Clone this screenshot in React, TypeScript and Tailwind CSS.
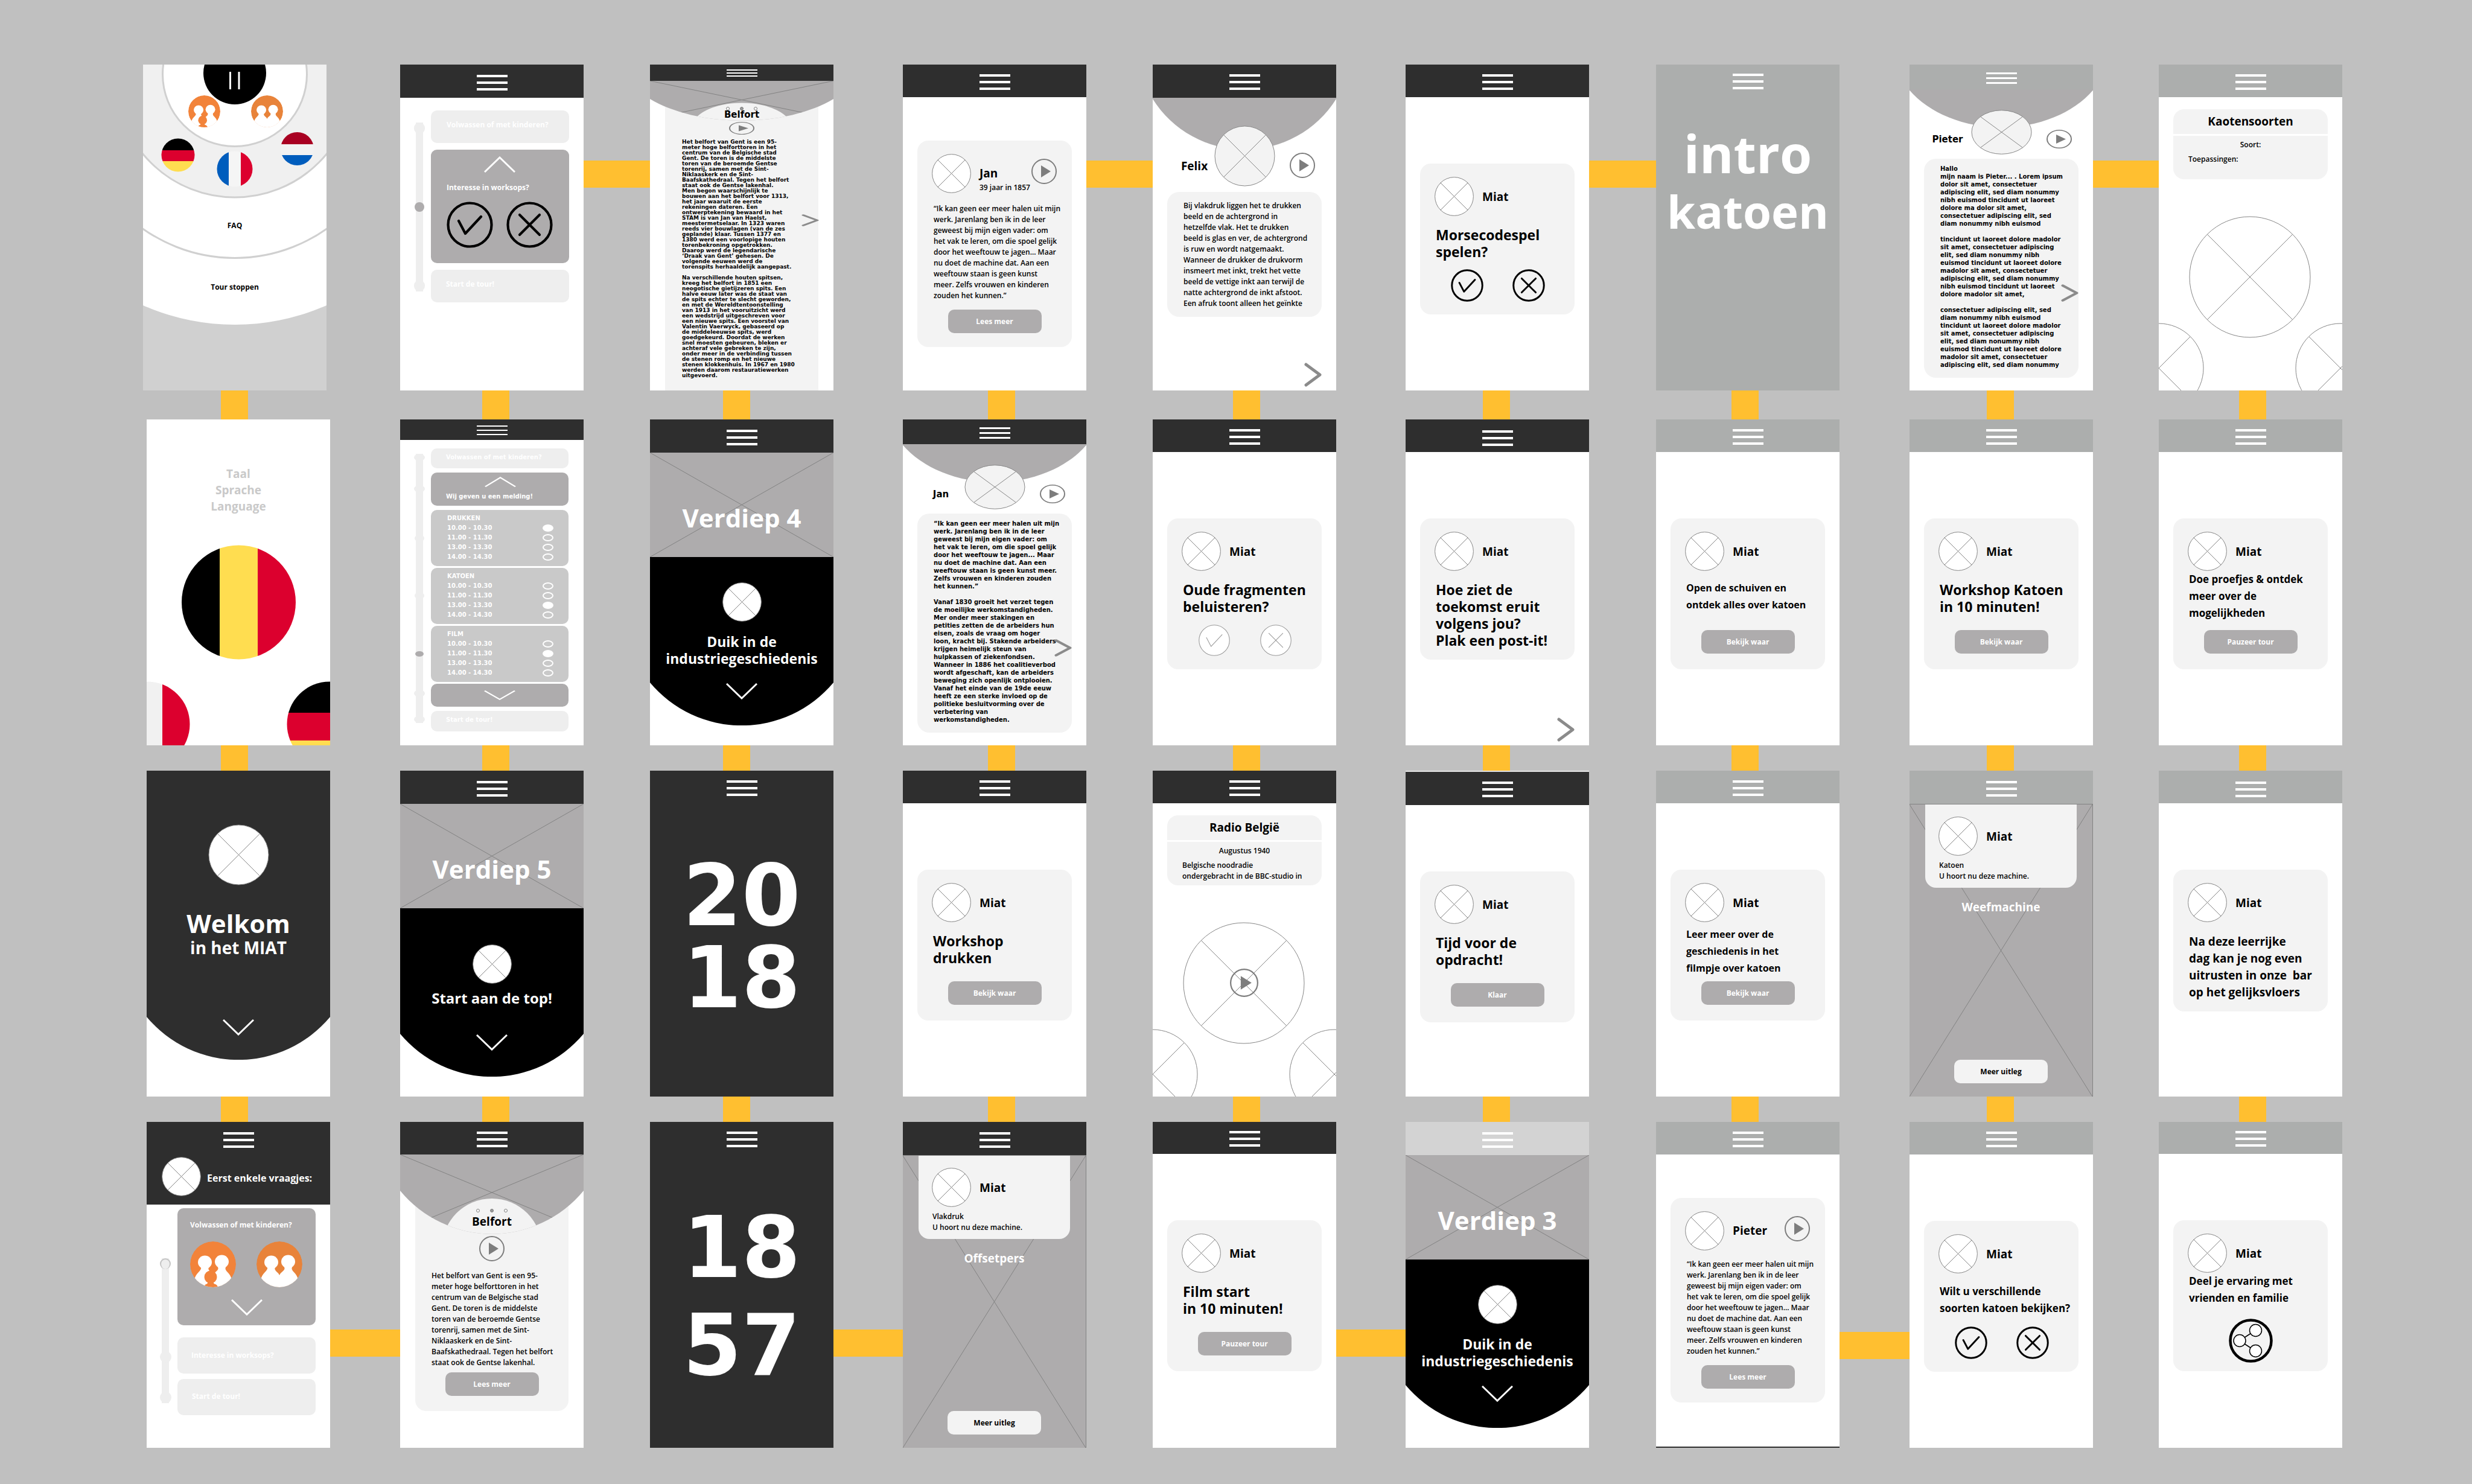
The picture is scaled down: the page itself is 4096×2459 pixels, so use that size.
import React, { ReactNode } from "react";

type Tone = "dark" | "gray" | "pale" | "none";

const toneClass: Record<Tone, string> = {
  dark: "bg-[#2e2e2e]",
  gray: "bg-[#acaead]",
  pale: "bg-[#d3d3d3]",
  none: "",
};

/* ---------- icons and drawings ---------- */

function Avatar({ className = "size-[65px]", fill = "#ffffff" }: { className?: string; fill?: string }) {
  return (
    <svg viewBox="0 0 102 102" preserveAspectRatio="none" className={`block shrink-0 ${className}`} aria-hidden="true">
      <g stroke="#868686" strokeWidth="1">
        <circle cx="51" cy="51" r="50" fill={fill} vectorEffect="non-scaling-stroke" />
        <path d="M15.6 15.6 86.4 86.4M86.4 15.6 15.6 86.4" vectorEffect="non-scaling-stroke" />
      </g>
    </svg>
  );
}

function PlayButton({ className = "h-[42px] w-[42px]" }: { className?: string }) {
  return (
    <button aria-label="Afspelen" className={`block shrink-0 ${className}`}>
      <svg viewBox="0 0 42 42" preserveAspectRatio="none" className="h-full w-full">
        <circle cx="21" cy="21" r="20" fill="none" stroke="#7d7d7d" strokeWidth="2" />
        <path d="M16 11 32 21 16 31Z" fill="#7d7d7d" />
      </svg>
    </button>
  );
}

function CheckIcon({ className, thin = false }: { className: string; thin?: boolean }) {
  return (
    <svg
      viewBox="0 0 77 77"
      className={className}
      fill={thin ? "#ffffff" : "none"}
      stroke={thin ? "#999999" : "#000000"}
      strokeWidth={thin ? 1.5 : 4.2}
      strokeLinecap="round"
      strokeLinejoin="round"
    >
      <circle cx="38.5" cy="38.5" r="36" />
      <path fill="none" d="M20 32 31 53 57 25" />
    </svg>
  );
}

function CrossIcon({ className, thin = false }: { className: string; thin?: boolean }) {
  return (
    <svg
      viewBox="0 0 77 77"
      className={className}
      fill={thin ? "#ffffff" : "none"}
      stroke={thin ? "#999999" : "#000000"}
      strokeWidth={thin ? 1.5 : 4.2}
      strokeLinecap="round"
    >
      <circle cx="38.5" cy="38.5" r="36" />
      <path d="M22 22 55 55M55 22 22 55" />
    </svg>
  );
}

function Caret({ up = false, className = "h-[27px] w-[52px]" }: { up?: boolean; className?: string }) {
  return (
    <svg viewBox="0 0 52 27" preserveAspectRatio="none" className={`block ${className}`} fill="none" stroke="#ffffff" strokeWidth="3">
      <path d={up ? "M1 26 26 2 51 26" : "M1 1 26 25 51 1"} />
    </svg>
  );
}

function Chevron({ className }: { className: string }) {
  return (
    <button aria-label="Volgende" className={`block ${className}`}>
      <svg
        viewBox="0 0 29 40"
        preserveAspectRatio="none"
        className="h-full w-full"
        fill="none"
        stroke="#8b8b8b"
        strokeWidth="5"
        strokeLinecap="round"
        strokeLinejoin="round"
      >
        <path d="M3 3 26 20 3 37" />
      </svg>
    </button>
  );
}

function Family({ child = false, className }: { child?: boolean; className: string }) {
  const tone = child ? "#f2833a" : "#e8833a";
  const id = child ? "family-child" : "family-pair";
  return (
    <svg viewBox="0 0 76 76" className={`block shrink-0 ${className}`}>
      <clipPath id={id}>
        <circle cx="38" cy="38" r="38" />
      </clipPath>
      <g clipPath={`url(#${id})`}>
        <circle cx="38" cy="38" r="38" fill={tone} />
        <g fill="#ffffff">
          <ellipse cx="24.5" cy="34.5" rx="11.5" ry="11" />
          <ellipse cx="52.5" cy="33.5" rx="11.5" ry="11" />
          <path d="M18 43Q19 46 14 51 8 57 7 64V76H69V64Q68 57 62 51 57 46 59 43H46Q48 46 43 50 39 53 38 56 37 53 33 50 29 46 31 43Z" />
        </g>
        {child && (
          <g fill={tone}>
            <ellipse cx="34" cy="59" rx="10.5" ry="10.5" />
            <path d="M29 67Q30 70 26 71 23 73 23 76H46Q45 72 42 71 38 70 39 67Z" />
          </g>
        )}
      </g>
    </svg>
  );
}

function ShareIcon({ className }: { className: string }) {
  return (
    <svg viewBox="0 0 73 73" className={className} fill="none" stroke="#000000">
      <circle cx="36.500" cy="36.500" r="34" strokeWidth="4.500" />
      <path d="M18 36.500 44 19.500M18 36.500 44 53.500" strokeWidth="1.500" />
      <g fill="#ffffff" strokeWidth="1.500">
        <circle cx="44.500" cy="19.500" r="10" />
        <circle cx="18" cy="36.500" r="10" />
        <circle cx="44.500" cy="53.500" r="10" />
      </g>
    </svg>
  );
}

function BoxCross({ color = "#828282" }: { color?: string }) {
  return (
    <svg viewBox="0 0 100 100" preserveAspectRatio="none" className="absolute inset-0 h-full w-full" stroke={color} aria-hidden="true">
      <path d="M0 0 100 100M100 0 0 100" vectorEffect="non-scaling-stroke" strokeWidth="1" />
    </svg>
  );
}

/* ---------- shared parts ---------- */

function Lines({ lines }: { lines: string[] }) {
  return (
    <>
      {lines.map((line, i) => (
        <span key={i} className="block whitespace-pre">
          {line === "" ? " " : line}
        </span>
      ))}
    </>
  );
}

function Menu({ flat = 1 }: { flat?: 1 | 2 | 3 | 4 }) {
  const bar = { 1: "h-1", 2: "h-[3px]", 3: "h-0.5", 4: "h-0.5" }[flat];
  const gap = { 1: "gap-[7px]", 2: "gap-[5px]", 3: "gap-[5px]", 4: "gap-[3px]" }[flat];
  return (
    <button aria-label="Menu" className={`flex w-[51px] flex-col ${gap}`}>
      <span className={`w-full bg-white ${bar}`} />
      <span className={`w-full bg-white ${bar}`} />
      <span className={`w-full bg-white ${bar}`} />
    </button>
  );
}

function Header({ tone = "dark", flat = 1, className = "h-[54px] pt-4" }: { tone?: Tone; flat?: 1 | 2 | 3 | 4; className?: string }) {
  return (
    <header className={`flex shrink-0 items-start justify-center ${toneClass[tone]} ${className}`}>
      <Menu flat={flat} />
    </header>
  );
}

function Screen({ className = "bg-white", children }: { className?: string; children?: ReactNode }) {
  return <section className={`relative flex min-h-[540px] flex-col overflow-hidden ${className}`}>{children}</section>;
}

function PillButton({ children, light = false }: { children: ReactNode; light?: boolean }) {
  return (
    <button
      className={`mx-auto block h-[39px] w-[155px] rounded-[10px] text-xs font-bold ${
        light ? "bg-[#f3f3f3] text-black" : "bg-[#aeacad] text-white"
      }`}
    >
      {children}
    </button>
  );
}

const textStyle = {
  heading: "pt-[17px] text-[23px] leading-7",
  close: "pt-[18px] text-[19px] leading-7",
  large: "pt-4 text-[17px] leading-7",
  mid: "pt-[14px] text-base leading-7",
  tight: "text-[17px] leading-7",
  lower: "pt-[6px] text-base leading-7",
};

function MessageScreen({
  tone = "dark",
  lines,
  style = "heading",
  action,
  choice,
  children,
  header = "h-[54px] pt-4",
}: {
  tone?: Tone;
  lines: string[];
  style?: keyof typeof textStyle;
  action?: string;
  choice?: "bold" | "thin";
  children?: ReactNode;
  header?: string;
}) {
  return (
    <Screen>
      <Header tone={tone} className={header} />
      <article className="mx-6 mt-[110px] rounded-[18px] bg-[#f3f3f3] pt-[22px]">
        <div className="flex items-center gap-[14px] pl-6">
          <Avatar />
          <h3 className="text-[19px] font-bold leading-6">Miat</h3>
        </div>
        <p className={`pl-[26px] font-bold ${choice ? "min-h-[88px]" : "min-h-[98px]"} ${textStyle[style]}`}>
          <Lines lines={lines} />
        </p>
        {action && (
          <div className="pb-[26px]">
            <PillButton>{action}</PillButton>
          </div>
        )}
        {choice && (
          <div className="flex gap-12 pb-[21px] pl-[51px]">
            <button aria-label="Ja">
              <CheckIcon className="size-[54px]" thin={choice === "thin"} />
            </button>
            <button aria-label="Nee">
              <CrossIcon className="size-[54px]" thin={choice === "thin"} />
            </button>
          </div>
        )}
        {children}
      </article>
    </Screen>
  );
}

const quote = [
  "“Ik kan geen eer meer halen uit mijn",
  "werk. Jarenlang ben ik in de leer",
  "geweest bij mijn eigen vader: om",
  "het vak te leren, om die spoel gelijk",
  "door het weeftouw te jagen... Maar",
  "nu doet de machine dat. Aan een",
];

function PersonScreen({ tone, name, sub, className }: { tone: Tone; name: string; sub?: string; className?: string }) {
  return (
    <Screen className={className}>
      <Header tone={tone} />
      <article className="mx-6 mt-[72px] rounded-[18px] bg-[#f3f3f3] pb-[23px] pt-[22px]">
        <div className="flex pl-6 pr-[25px]">
          <Avatar />
          <div className="flex-1 pl-[14px] pt-5">
            <h3 className="text-[19px] font-bold leading-6">{name}</h3>
            {sub && <p className="whitespace-nowrap text-xs font-semibold leading-6">{sub}</p>}
          </div>
          <div className="pt-2">
            <PlayButton />
          </div>
        </div>
        <p className="pb-[14px] pl-[27px] pt-[14px] text-xs font-semibold leading-[18px]">
          <Lines lines={[...quote, "weeftouw staan is geen kunst", "meer. Zelfs vrouwen en kinderen", "zouden het kunnen.”"]} />
        </p>
        <PillButton>Lees meer</PillButton>
      </article>
    </Screen>
  );
}

/* Profile page: grey bowl behind the portrait, text card below. */
function BioScreen({
  tone,
  name,
  lines,
  squat = false,
}: {
  tone: Tone;
  name: string;
  lines: string[];
  squat?: boolean;
}) {
  return (
    <Screen>
      {squat ? <Header tone={tone} flat={2} className="h-[41px] pt-[13px]" /> : <Header tone={tone} className="h-[55px] pt-4" />}
      <div className={`relative grid grid-cols-[102px_101px_1fr] ${squat ? "pt-[34px]" : "pt-[46px]"}`}>
        <svg
          viewBox="0 0 304 86"
          preserveAspectRatio="none"
          className={`absolute inset-x-0 top-0 w-full ${squat ? "h-[63px]" : "h-[86px]"}`}
          aria-hidden="true"
        >
          <path d="M0 0H304V2A179.500 179.500 0 0 1 0 2Z" fill="#aeacad" />
        </svg>
        <h3
          className={`relative self-center text-center font-bold ${
            squat ? "pl-6 pt-6 font-['DejaVu_Sans',sans-serif] text-[15px]" : "pl-9 pt-[34px] text-[19px]"
          }`}
        >
          {name}
        </h3>
        <Avatar fill="#f3f3f3" className={squat ? "relative h-[74px] w-[101px]" : "relative h-[101px] w-[101px]"} />
        <div className={squat ? "pl-6 pt-[33px]" : "pl-6 pt-[45px]"}>
          <PlayButton className={squat ? "h-[31px] w-[42px]" : "h-[42px] w-[42px]"} />
        </div>
      </div>
      <article
        className={`mx-6 rounded-[20px] bg-[#f3f3f3] pl-[27px] ${
          squat
            ? "mt-[7px] pb-[15px] pt-[10px] font-['DejaVu_Sans',sans-serif] text-[10px] font-bold leading-[13px]"
            : "mt-[9px] pb-[13px] pt-[14px] text-xs font-semibold leading-[18px]"
        }`}
      >
        <Lines lines={lines} />
      </article>
      {squat ? (
        <Chevron className="absolute right-6 top-[364px] h-[29px] w-[29px]" />
      ) : (
        <Chevron className="absolute bottom-[6px] right-6 h-10 w-[29px]" />
      )}
    </Screen>
  );
}

function FloorScreen({
  tone = "dark",
  floor,
  lines,
  gap,
  text = "pt-[19px] text-[23px]",
}: {
  tone?: Tone;
  floor: string;
  lines: string[];
  gap: string;
  text?: string;
}) {
  return (
    <Screen>
      <Header tone={tone} className="h-[55px] pt-[17px]" />
      <div className="relative h-[173px] bg-[#aeacad]">
        <BoxCross />
        <h2 className="relative pt-20 text-center text-[42px] font-bold leading-[56px] text-white">{floor}</h2>
      </div>
      <div className={`relative flex h-[279px] flex-col items-center text-white ${gap}`}>
        <svg viewBox="0 0 304 279" preserveAspectRatio="none" className="absolute inset-0 h-full w-full" aria-hidden="true">
          <path d="M0 0H304V208A198 198 0 0 1 0 208Z" />
        </svg>
        <Avatar className="relative size-[65px]" />
        <p className={`relative flex-1 text-center font-bold leading-7 ${text}`}>
          <Lines lines={lines} />
        </p>
        <button aria-label="Omlaag" className="relative pb-[43px]">
          <Caret />
        </button>
      </div>
    </Screen>
  );
}

function MachineScreen({ tone, topic, machine }: { tone: Tone; topic: string; machine: string }) {
  return (
    <Screen className="bg-[#aeacad]">
      <Header tone={tone} className="h-[55px] pt-[17px]" />
      <div className="relative flex flex-1 flex-col border-r border-t border-[#828282]">
        <BoxCross />
        <article className="relative mx-[26px] h-[138px] rounded-b-[18px] bg-[#f3f3f3] pt-5">
          <div className="flex items-center gap-[14px] pl-[22px]">
            <Avatar />
            <h3 className="text-[19px] font-bold leading-6">Miat</h3>
          </div>
          <p className="pl-[23px] pt-[7px] text-xs font-semibold leading-[18px]">
            <Lines lines={[topic, "U hoort nu deze machine."]} />
          </p>
        </article>
        <h4 className="relative flex-1 pt-5 text-center text-[19px] font-bold leading-6 text-white">{machine}</h4>
        <div className="relative pb-[22px]">
          <PillButton light>Meer uitleg</PillButton>
        </div>
      </div>
    </Screen>
  );
}

function YearScreen({ lines, gap }: { lines: string[]; gap: string }) {
  return (
    <Screen className="bg-[#2e2e2e]">
      <Header tone="none" className="h-[54px] pt-4" />
      <p className={`flex flex-col text-center font-['DejaVu_Sans',sans-serif] text-[140px] font-bold leading-[136px] text-white ${gap}`}>
        <Lines lines={lines} />
      </p>
    </Screen>
  );
}

function MediaScreen({ tone, title, sub, lines, play = false }: { tone: Tone; title: string; sub: string; lines: string[]; play?: boolean }) {
  return (
    <Screen>
      <Header tone={tone} />
      <article className="mx-6 mt-5 flex flex-col gap-[3px]">
        <h3 className="rounded-t-[18px] bg-[#f3f3f3] py-2 text-center text-[19px] font-bold leading-[25px]">{title}</h3>
        <div className="h-[72px] rounded-b-[18px] bg-[#f3f3f3] pt-[6px] text-xs font-semibold leading-[18px]">
          <p className="text-center">{sub}</p>
          <p className="pl-[25px] pt-[6px]">
            <Lines lines={lines} />
          </p>
        </div>
      </article>
      <div className="relative flex-1">
        <svg viewBox="0 0 304 350" className="absolute inset-0 h-full w-full" fill="none" stroke="#868686" aria-hidden="true">
          <circle cx="151" cy="162" r="100" />
          <path d="M80 91 222 233M222 91 80 233" />
          <circle cx="0" cy="313" r="74" />
          <path d="M0 313 52 261M0 313 37 350" />
          <circle cx="301" cy="313" r="74" />
          <path d="M301 313 249 261M304 316 301 313M304 310 264 350" />
        </svg>
        {play && <PlayButton className="relative ml-32 mt-[138px] h-[47px] w-[47px]" />}
      </div>
    </Screen>
  );
}

const belfort = [
  "Het belfort van Gent is een 95-",
  "meter hoge belforttoren in het",
  "centrum van de Belgische stad",
  "Gent. De toren is de middelste",
  "toren van de beroemde Gentse",
  "torenrij, samen met de Sint-",
  "Niklaaskerk en de Sint-",
  "Baafskathedraal. Tegen het belfort",
  "staat ook de Gentse lakenhal.",
];

const belfortMore = [
  "Men begon waarschijnlijk te",
  "bouwen aan het belfort voor 1313,",
  "het jaar waaruit de eerste",
  "rekeningen dateren. Een",
  "ontwerptekening bewaard in het",
  "STAM is van Jan van Haelst,",
  "meestermetselaar. In 1323 waren",
  "reeds vier bouwlagen (van de zes",
  "geplande) klaar. Tussen 1377 en",
  "1380 werd een voorlopige houten",
  "torenbekroning opgetrokken.",
  "Daarop werd de legendarische",
  "‘Draak van Gent’ gehesen. De",
  "volgende eeuwen werd de",
  "torenspits herhaaldelijk aangepast.",
  "",
  "Na verschillende houten spitsen,",
  "kreeg het belfort in 1851 een",
  "neogotische gietijzeren spits. Een",
  "halve eeuw later was de staat van",
  "de spits echter te slecht geworden,",
  "en met de Wereldtentoonstelling",
  "van 1913 in het vooruitzicht werd",
  "een wedstrijd uitgeschreven voor",
  "een nieuwe spits. Een voorstel van",
  "Valentin Vaerwyck, gebaseerd op",
  "de middeleeuwse spits, werd",
  "goedgekeurd. Doordat de werken",
  "snel moesten gebeuren, bleken er",
  "achteraf vele gebreken te zijn,",
  "onder meer in de verbinding tussen",
  "de stenen romp en het nieuwe",
  "stenen klokkenhuis. In 1967 en 1980",
  "werden daarom restauratiewerken",
  "uitgevoerd.",
];

function BelfortHero({ id, className }: { id: string; className: string }) {
  return (
    <svg viewBox="0 0 304 190" preserveAspectRatio="none" className={`absolute inset-x-0 top-0 w-full ${className}`} aria-hidden="true">
      <clipPath id={id}>
        <path d="M0 0H304V60A197 197 0 0 1 0 60Z" />
      </clipPath>
      <g clipPath={`url(#${id})`}>
        <rect width="304" height="190" fill="#aeacad" />
        <path d="M0 0 304 126M304 0 0 126" stroke="#828282" vectorEffect="non-scaling-stroke" />
        <circle cx="152" cy="156" r="83" fill="#f3f3f3" />
      </g>
    </svg>
  );
}

function Dots({ className }: { className: string }) {
  return (
    <div className={`flex items-center justify-center gap-[17px] ${className}`}>
      <span className="size-[6px] rounded-full border border-[#7d7d7d] bg-white" />
      <span className="size-[6px] rounded-full border border-[#7d7d7d] bg-[#9a9a9a]" />
      <span className="size-[6px] rounded-full border border-[#7d7d7d] bg-white" />
    </div>
  );
}

function BelfortShort() {
  return (
    <Screen>
      <Header className="h-[54px] pt-4" />
      <div className="relative">
        <BelfortHero id="belfort-short" className="h-[190px]" />
        <article className="mx-[25px] rounded-[18px] bg-[#f3f3f3] pb-[25px] pt-[90px]">
          <div className="relative flex flex-col items-center">
            <Dots className="h-[6px]" />
            <h3 className="pt-[3px] text-[19px] font-bold leading-6">Belfort</h3>
            <div className="pt-3">
              <PlayButton />
            </div>
            <p className="self-start pb-[7px] pl-[27px] pt-[15px] text-xs font-semibold leading-[18px]">
              <Lines lines={belfort} />
            </p>
            <PillButton>Lees meer</PillButton>
          </div>
        </article>
      </div>
    </Screen>
  );
}

function BelfortLong() {
  return (
    <Screen>
      <Header flat={4} className="h-[27px] pt-2" />
      <div className="relative flex flex-1 flex-col">
        <BelfortHero id="belfort-long" className="h-[95px]" />
        <article className="mx-[25px] flex-1 bg-[#f3f3f3] pt-11">
          <div className="relative flex flex-col items-center font-['DejaVu_Sans',sans-serif] font-bold">
            <Dots className="h-1" />
            <h3 className="text-[15px] leading-4">Belfort</h3>
            <div className="pt-1">
              <PlayButton className="h-[21px] w-[42px]" />
            </div>
            <p className="self-start pl-[28px] pt-2 text-[9px] leading-[9px]">
              <Lines lines={[...belfort, ...belfortMore]} />
            </p>
          </div>
        </article>
      </div>
      <Chevron className="absolute right-6 top-[248px] h-5 w-[29px]" />
    </Screen>
  );
}

/* ---------- individual screens ---------- */

function WheelScreen() {
  return (
    <Screen className="-ml-[6px] mr-[6px] bg-[#d0d0d0]">
      <svg viewBox="0 0 304 540" className="absolute inset-0 h-full w-full" aria-hidden="true">
        <circle cx="152" cy="54" r="377" fill="#ffffff" />
        <circle cx="152" cy="57" r="263.500" fill="#ffffff" stroke="#d0d0d0" strokeWidth="3" />
        <circle cx="152" cy="23" r="197" fill="#f0f0f0" stroke="#d0d0d0" strokeWidth="3" />
        <circle cx="152" cy="16" r="119.500" fill="#ffffff" stroke="#d0d0d0" strokeWidth="3" />
        <circle cx="152" cy="14" r="52" />
        <path d="M144.500 12V41M159 12V41" stroke="#ffffff" strokeWidth="3" />
        <clipPath id="flag-de">
          <circle cx="58" cy="150" r="27.500" />
        </clipPath>
        <g clipPath="url(#flag-de)">
          <rect x="30" y="122" width="56" height="20" />
          <rect x="30" y="142" width="56" height="18" fill="#dc002e" />
          <rect x="30" y="160" width="56" height="18" fill="#ffdd50" />
        </g>
        <clipPath id="flag-fr">
          <circle cx="152" cy="173" r="29.500" />
        </clipPath>
        <g clipPath="url(#flag-fr)">
          <rect x="122" y="143" width="20" height="60" fill="#005dbd" />
          <rect x="142" y="143" width="20" height="60" fill="#f5f5f5" />
          <rect x="162" y="143" width="20" height="60" fill="#dc002e" />
        </g>
        <clipPath id="flag-nl">
          <circle cx="255.500" cy="139.500" r="27.500" />
        </clipPath>
        <g clipPath="url(#flag-nl)">
          <rect x="228" y="112" width="56" height="20" fill="#a90022" />
          <rect x="228" y="132" width="56" height="18" fill="#f2f2f2" />
          <rect x="228" y="150" width="56" height="18" fill="#005dbd" />
        </g>
      </svg>
      <div className="relative flex h-[255px] gap-[51px] pl-[75px] pt-[51px]">
        <Family child className="size-[53px]" />
        <Family className="size-[53px]" />
      </div>
      <button className="relative mx-auto block text-xs font-bold leading-6">FAQ</button>
      <button className="relative mx-auto mt-[78px] block text-xs font-bold leading-6">Tour stoppen</button>
    </Screen>
  );
}

function LanguageScreen() {
  return (
    <Screen>
      <svg viewBox="0 0 304 540" className="absolute inset-0 h-full w-full" aria-hidden="true">
        <clipPath id="flag-be">
          <circle cx="152.500" cy="303" r="94.500" />
        </clipPath>
        <g clipPath="url(#flag-be)">
          <rect x="58" y="208" width="63" height="190" />
          <rect x="121" y="208" width="63" height="190" fill="#ffdd50" />
          <rect x="184" y="208" width="63" height="190" fill="#dc002e" />
        </g>
        <clipPath id="flag-left">
          <circle cx="1" cy="505" r="70.500" />
        </clipPath>
        <g clipPath="url(#flag-left)">
          <rect x="0" y="430" width="26" height="110" fill="#f1f1f1" />
          <rect x="26" y="430" width="50" height="110" fill="#dc002e" />
        </g>
        <clipPath id="flag-right">
          <circle cx="303" cy="505" r="70.500" />
        </clipPath>
        <g clipPath="url(#flag-right)">
          <rect x="230" y="430" width="74" height="56" />
          <rect x="230" y="486" width="74" height="46" fill="#dc002e" />
          <rect x="230" y="532" width="74" height="8" fill="#ffdd50" />
        </g>
      </svg>
      <h2 className="relative pt-[77px] text-center text-[19px] font-bold leading-[27px] text-[#c9c9c9]">
        <Lines lines={["Taal", "Sprache", "Language"]} />
      </h2>
    </Screen>
  );
}

function WelcomeScreen() {
  return (
    <Screen>
      <div className="relative flex h-[479px] flex-col items-center pt-[89px] text-white">
        <svg viewBox="0 0 304 479" preserveAspectRatio="none" className="absolute inset-0 h-full w-full" aria-hidden="true">
          <path d="M0 0H304V408A198 198 0 0 1 0 408Z" fill="#2e2e2e" />
        </svg>
        <Avatar className="relative size-[101px]" />
        <h1 className="relative pt-[37px] text-[42px] font-bold leading-[52px]">Welkom</h1>
        <p className="relative flex-1 text-[28px] font-bold leading-7">in het MIAT</p>
        <button aria-label="Omlaag" className="relative pb-10">
          <Caret />
        </button>
      </div>
    </Screen>
  );
}

function WorkshopQuestion() {
  return (
    <Screen>
      <Header className="h-[55px] pt-[17px]" />
      <div className="flex gap-[10px] pl-[23px] pt-[21px]">
        <div className="mt-5 flex h-[280px] w-[18px] flex-col items-center justify-between bg-[linear-gradient(#eeeeee,#eeeeee)] bg-[length:12px_100%] bg-center bg-no-repeat">
          <span className="h-[19px] w-[18px] rounded-full bg-[#eeeeee]" />
          <span className="size-4 rounded-full bg-[#aeacad]" />
          <span className="h-[19px] w-[18px] rounded-full bg-[#eeeeee]" />
        </div>
        <div className="flex w-[229px] flex-col gap-[11px] text-xs font-bold text-white">
          <div className="h-[54px] rounded-[10px] bg-[#eeeeee] pl-[26px] pt-[15px] leading-[18px]">Volwassen of met kinderen?</div>
          <div className="h-[188px] rounded-[10px] bg-[#aeacad] pl-[26px] pt-[11px]">
            <button aria-label="Omhoog" className="ml-[62px] block">
              <Caret up />
            </button>
            <p className="pt-4 leading-[18px]">Interesse in worksops?</p>
            <div className="flex gap-[22px] pt-[14px]">
              <button aria-label="Ja">
                <CheckIcon className="size-[77px]" />
              </button>
              <button aria-label="Nee">
                <CrossIcon className="size-[77px]" />
              </button>
            </div>
          </div>
          <div className="h-[54px] rounded-[10px] bg-[#eeeeee] pl-[25px] pt-[15px] leading-[18px]">Start de tour!</div>
        </div>
      </div>
    </Screen>
  );
}

const slots = ["10.00 - 10.30", "11.00 - 11.30", "13.00 - 13.30", "14.00 - 14.30"];

function SlotGroup({ title, chosen }: { title: string; chosen: number }) {
  return (
    <fieldset className="h-[93px] rounded-[10px] bg-[#c9c9c9] pl-[27px] pr-[25px] pt-[6px]">
      <p className="leading-4">{title}</p>
      {slots.map((slot, i) => (
        <label key={slot} className="flex items-center justify-between leading-4">
          {slot}
          <input
            type="radio"
            name={title}
            defaultChecked={i === chosen}
            className="h-3 w-[18px] appearance-none rounded-[50%] border-2 border-white checked:bg-white"
          />
        </label>
      ))}
    </fieldset>
  );
}

function ScheduleScreen() {
  return (
    <Screen>
      <Header flat={3} className="h-[34px] pt-[10px]" />
      <div className="flex gap-[10px] pl-[23px] pt-[14px]">
        <div className="mt-[9px] flex h-[446px] w-[18px] flex-col items-center bg-[linear-gradient(#eeeeee,#eeeeee)] bg-[length:12px_100%] bg-center bg-no-repeat">
          <span className="h-3 w-[18px] rounded-[50%] bg-[#eeeeee]" />
          <span className="mt-10 h-3 w-[18px] rounded-[50%] bg-[#eeeeee]" />
          <span className="mt-[70px] h-3 w-4 rounded-[50%] bg-[#eeeeee]" />
          <span className="mt-[83px] h-3 w-4 rounded-[50%] bg-[#eeeeee]" />
          <span className="mt-[86px] h-[9px] w-[14px] rounded-[50%] bg-[#aeacad]" />
          <span className="mt-[55px] h-3 w-[18px] rounded-[50%] bg-[#eeeeee]" />
          <span className="mt-[31px] h-3 w-[18px] rounded-[50%] bg-[#eeeeee]" />
        </div>
        <div className="flex w-[228px] flex-col gap-[7px] font-['DejaVu_Sans',sans-serif] text-[10px] font-bold text-white">
          <div className="h-[33px] rounded-[10px] bg-[#eeeeee] pl-[25px] pt-2 leading-[13px]">Volwassen of met kinderen?</div>
          <div className="h-[55px] rounded-[10px] bg-[#aeacad] pl-[25px] pt-[7px]">
            <button aria-label="Omhoog" className="ml-16 block">
              <Caret up className="h-[17px] w-[52px]" />
            </button>
            <p className="pt-[9px] leading-[13px]">Wij geven u een melding!</p>
          </div>
          <div className="flex flex-col gap-[3px]">
            <SlotGroup title="DRUKKEN" chosen={0} />
            <SlotGroup title="KATOEN" chosen={2} />
            <SlotGroup title="FILM" chosen={1} />
            <button aria-label="Omlaag" className="flex h-[38px] items-center justify-center rounded-[10px] bg-[#aeacad]">
              <Caret className="h-4 w-[52px]" />
            </button>
          </div>
          <div className="h-[34px] rounded-[10px] bg-[#eeeeee] pl-[25px] pt-2 leading-[13px]">Start de tour!</div>
        </div>
      </div>
    </Screen>
  );
}

function QuestionsScreen() {
  return (
    <Screen>
      <div className="h-[137px] bg-[#2e2e2e]">
        <Header tone="none" className="h-[58px] pt-[17px]" />
        <div className="flex items-center gap-[10px] pl-[25px] text-white">
          <Avatar />
          <h3 className="whitespace-nowrap pt-1 text-base font-bold">Eerst enkele vraagjes:</h3>
        </div>
      </div>
      <div className="flex gap-[10px] pl-[21px] pt-[6px] text-xs font-bold text-white">
        <div className="mt-[83px] flex h-[240px] w-5 flex-col items-center bg-[linear-gradient(#eeeeee,#eeeeee)] bg-[length:12px_100%] bg-center bg-no-repeat">
          <span className="h-[18px] w-[18px] rounded-full border-2 border-b-0 border-[#c4c4c4] bg-[#eeeeee]" />
          <span className="mt-[136px] h-[19px] w-[19px] rounded-full bg-[#eeeeee]" />
          <span className="mt-[48px] h-[19px] w-[19px] rounded-full bg-[#eeeeee]" />
        </div>
        <div className="w-[229px]">
          <div className="h-[194px] rounded-[10px] bg-[#aeacad] pl-[21px] pt-[19px]">
            <p className="leading-[18px]">Volwassen of met kinderen?</p>
            <div className="flex gap-[34px] pt-[18px]">
              <button aria-label="Met kinderen">
                <Family child className="size-[76px]" />
              </button>
              <button aria-label="Volwassen">
                <Family className="size-[76px]" />
              </button>
            </div>
            <button aria-label="Omlaag" className="ml-[68px] mt-5 block">
              <Caret />
            </button>
          </div>
          <div className="mt-5 h-[60px] rounded-[10px] bg-[#eeeeee] pl-[23px] pt-[21px] leading-[18px]">Interesse in worksops?</div>
          <div className="mt-[9px] h-[60px] rounded-[10px] bg-[#eeeeee] pl-6 pt-5 leading-[18px]">Start de tour!</div>
        </div>
      </div>
    </Screen>
  );
}

function IntroScreen() {
  return (
    <Screen className="bg-[#acaead]">
      <Header tone="gray" className="h-[54px] pt-[15px]" />
      <h1 className="pt-[47px] text-center font-bold text-white">
        <span className="block text-[86px] leading-[92px]">intro</span>
        <span className="block text-[76px] leading-[100px]">katoen</span>
      </h1>
    </Screen>
  );
}

const felixText = [
  "Bij vlakdruk liggen het te drukken",
  "beeld en de achtergrond in",
  "hetzelfde vlak. Het te drukken",
  "beeld is glas en ver, de achtergrond",
  "is ruw en wordt natgemaakt.",
  "Wanneer de drukker de drukvorm",
  "insmeert met inkt, trekt het vette",
  "beeld de vettige inkt aan terwijl de",
  "natte achtergrond de inkt afstoot.",
  "Een afruk toont alleen het geïnkte",
];

const pieterText = [
  "Hallo",
  "mijn naam is Pieter... . Lorem ipsum",
  "dolor sit amet, consectetuer",
  "adipiscing elit, sed diam nonummy",
  "nibh euismod tincidunt ut laoreet",
  "dolore ma dolor sit amet,",
  "consectetuer adipiscing elit, sed",
  "diam nonummy nibh euismod",
  "",
  "tincidunt ut laoreet dolore madolor",
  "sit amet, consectetuer adipiscing",
  "elit, sed diam nonummy nibh",
  "euismod tincidunt ut laoreet dolore",
  "madolor sit amet, consectetuer",
  "adipiscing elit, sed diam nonummy",
  "nibh euismod tincidunt ut laoreet",
  "dolore madolor sit amet,",
  "",
  "consectetuer adipiscing elit, sed",
  "diam nonummy nibh euismod",
  "tincidunt ut laoreet dolore madolor",
  "sit amet, consectetuer adipiscing",
  "elit, sed diam nonummy nibh",
  "euismod tincidunt ut laoreet dolore",
  "madolor sit amet, consectetuer",
  "adipiscing elit, sed diam nonummy",
];

const janText = [
  ...quote,
  "weeftouw staan is geen kunst meer.",
  "Zelfs vrouwen en kinderen zouden",
  "het kunnen.”",
  "",
  "Vanaf 1830 groeit het verzet tegen",
  "de moeilijke werkomstandigheden.",
  "Mer onder meer stakingen en",
  "petities zetten de de arbeiders hun",
  "eisen, zoals de vraag om hoger",
  "loon, kracht bij. Stakende arbeiders",
  "krijgen heimelijk steun van",
  "hulpkassen of ziekenfondsen.",
  "Wanneer in 1886 het coalitieverbod",
  "wordt afgeschaft, kan de arbeiders",
  "beweging zich openlijk ontplooien.",
  "Vanaf het einde van de 19de eeuw",
  "heeft ze een sterke invloed op de",
  "politieke besluitvorming over de",
  "verbetering van",
  "werkomstandigheden.",
];

/* ---------- board ---------- */

const tracks =
  "grid grid-cols-[304fr_116fr_304fr_110fr_304fr_115fr_304fr_110fr_304fr_115fr_304fr_111fr_304fr_116fr_304fr_109fr_304fr]";

function BoardRow({ screens, links }: { screens: ReactNode[]; links?: Record<number, string> }) {
  return (
    <div className={tracks}>
      {screens.map((screen, i) => (
        <React.Fragment key={i}>
          {screen}
          {i < 8 && <div className={links?.[i] ?? ""}>{links?.[i] && <div className="h-[45px] bg-[#ffbf30]" />}</div>}
        </React.Fragment>
      ))}
    </div>
  );
}

const linkMargins = [
  "ml-[123px]",
  "ml-[136px]",
  "ml-[121px]",
  "ml-[141px]",
  "ml-[133px]",
  "ml-[128px]",
  "ml-[125px]",
  "ml-[128px]",
  "ml-[133px]",
];

function LinkRow({ className }: { className: string }) {
  return (
    <div className={`${tracks} ${className}`}>
      {linkMargins.map((margin, i) => (
        <React.Fragment key={i}>
          <div className={`w-[45px] bg-[#ffbf30] ${margin}`} />
          {i < 8 && <div />}
        </React.Fragment>
      ))}
    </div>
  );
}

export default function App() {
  return (
    <main className="min-h-screen bg-[#c0c0c0] pb-[60px] pl-[243px] pr-[215px] pt-[107px] font-['Open_Sans',sans-serif] text-black">
      <BoardRow
        links={{ 1: "pt-[159px]", 3: "pt-[159px]", 5: "pt-[159px]", 7: "pt-[159px]" }}
        screens={[
          <WheelScreen />,
          <WorkshopQuestion />,
          <BelfortLong />,
          <PersonScreen tone="dark" name="Jan" sub="39 jaar in 1857" />,
          <BioScreen tone="dark" name="Felix" lines={felixText} />,
          <MessageScreen lines={["Morsecodespel", "spelen?"]} choice="bold" />,
          <IntroScreen />,
          <BioScreen squat tone="gray" name="Pieter" lines={pieterText} />,
          <MediaScreen tone="gray" title="Kaotensoorten" sub="Soort:" lines={["Toepassingen:"]} />,
        ]}
      />
      <LinkRow className="h-12" />
      <BoardRow
        screens={[
          <LanguageScreen />,
          <ScheduleScreen />,
          <FloorScreen floor="Verdiep 4" gap="pt-[42px]" lines={["Duik in de", "industriegeschiedenis"]} />,
          <BioScreen squat tone="dark" name="Jan" lines={janText} />,
          <MessageScreen lines={["Oude fragmenten", "beluisteren?"]} choice="thin" />,
          <MessageScreen header="h-[54px] pt-[18px]" lines={["Hoe ziet de", "toekomst eruit", "volgens jou?", "Plak een post-it!"]}>
            <div className="h-[18px]" />
            <Chevron className="absolute bottom-[6px] right-6 h-10 w-[29px]" />
          </MessageScreen>,
          <MessageScreen tone="gray" style="mid" lines={["Open de schuiven en", "ontdek alles over katoen"]} action="Bekijk waar" />,
          <MessageScreen tone="gray" lines={["Workshop Katoen", "in 10 minuten!"]} action="Bekijk waar" />,
          <MessageScreen tone="gray" style="tight" lines={["Doe proefjes & ontdek", "meer over de", "mogelijkheden"]} action="Pauzeer tour" />,
        ]}
      />
      <LinkRow className="h-[42px]" />
      <BoardRow
        screens={[
          <WelcomeScreen />,
          <FloorScreen floor="Verdiep 5" gap="pt-[60px]" text="pt-[10px] text-2xl" lines={["Start aan de top!"]} />,
          <YearScreen lines={["20", "18"]} gap="pt-[86px]" />,
          <MessageScreen lines={["Workshop", "drukken"]} action="Bekijk waar" />,
          <MediaScreen
            play
            tone="dark"
            title="Radio België"
            sub="Augustus 1940"
            lines={["Belgische noodradie", "ondergebracht in de BBC-studio in"]}
          />,
          <MessageScreen header="h-[57px] border-t-2 border-[#e4e4e4] pt-4" lines={["Tijd voor de", "opdracht!"]} action="Klaar" />,
          <MessageScreen
            tone="gray"
            style="lower"
            lines={["Leer meer over de", "geschiedenis in het", "filmpje over katoen"]}
            action="Bekijk waar"
          />,
          <MachineScreen tone="gray" topic="Katoen" machine="Weefmachine" />,
          <MessageScreen
            tone="gray"
            header="h-[54px] pt-[18px]"
            style="close"
            lines={["Na deze leerrijke", "dag kan je nog even", "uitrusten in onze  bar", "op het gelijksvloers"]}
          >
            <div className="h-[18px]" />
          </MessageScreen>,
        ]}
      />
      <LinkRow className="h-[42px]" />
      <BoardRow
        links={{ 0: "pt-[344px]", 2: "pt-[344px]", 4: "pt-[344px]", 6: "pt-[348px]" }}
        screens={[
          <QuestionsScreen />,
          <BelfortShort />,
          <YearScreen lines={["18", "57"]} gap="gap-[26px] pt-[87px]" />,
          <MachineScreen tone="dark" topic="Vlakdruk" machine="Offsetpers" />,
          <MessageScreen header="h-[53px] pt-[15px]" lines={["Film start", "in 10 minuten!"]} action="Pauzeer tour" />,
          <FloorScreen tone="pale" floor="Verdiep 3" gap="pt-[42px]" lines={["Duik in de", "industriegeschiedenis"]} />,
          <PersonScreen tone="gray" name="Pieter" className="border-b-2 border-[#2e2e2e] bg-white" />,
          <MessageScreen
            tone="gray"
            style="large"
            lines={["Wilt u verschillende", "soorten katoen bekijken?"]}
            choice="bold"
          />,
          <MessageScreen tone="gray" header="h-[53px] pt-[15px]" style="tight" lines={["Deel je ervaring met", "vrienden en familie"]}>
            <div className="-mt-[22px] flex justify-center pb-[14px]">
              <button aria-label="Delen">
                <ShareIcon className="size-[73px]" />
              </button>
            </div>
          </MessageScreen>,
        ]}
      />
    </main>
  );
}
